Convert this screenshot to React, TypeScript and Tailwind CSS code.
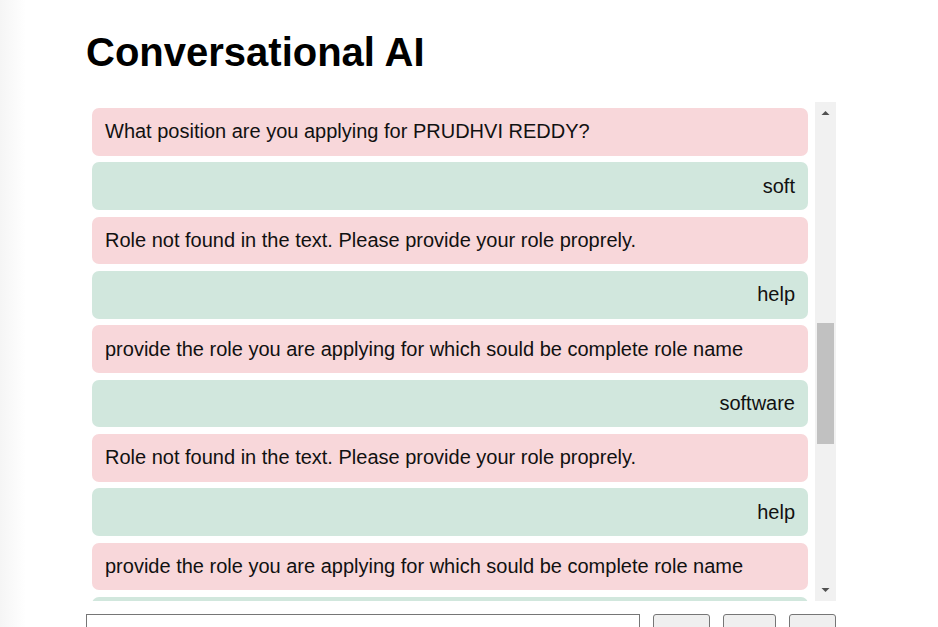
import React from "react";

type Msg = { text: string; from: "bot" | "user" };

const messages: Msg[] = [
  { text: "What position are you applying for PRUDHVI REDDY?", from: "bot" },
  { text: "soft", from: "user" },
  { text: "Role not found in the text. Please provide your role proprely.", from: "bot" },
  { text: "help", from: "user" },
  { text: "provide the role you are applying for which sould be complete role name", from: "bot" },
  { text: "software", from: "user" },
  { text: "Role not found in the text. Please provide your role proprely.", from: "bot" },
  { text: "help", from: "user" },
  { text: "provide the role you are applying for which sould be complete role name", from: "bot" },
  { text: "", from: "user" },
];

export default function App() {
  return (
    <div
      className="relative w-[938px] h-[627px] overflow-hidden bg-white text-black"
      style={{ fontFamily: '"Liberation Sans", Arial, sans-serif' }}
    >
      <div className="absolute left-0 top-0 h-full w-[26px] bg-gradient-to-r from-[#f5f5f5] to-white" />
      <div className="relative ml-[86px] w-[750px] pt-[29px]">
        <h1 className="text-[40px] font-bold leading-[46px] m-0">Conversational AI</h1>
        <div className="mt-[27px] flex h-[499px] overflow-hidden">
          <div className="flex-1 flex flex-col gap-[6.85px] pl-[6px] pr-[7px] pt-[6px]">
            {messages.map((m, i) => (
              <div
                key={i}
                className={
                  "shrink-0 h-[47.5px] rounded-[7px] px-[13px] flex items-center text-[20px] leading-[23px] text-[#111] " +
                  (m.from === "bot" ? "bg-[#f8d7da] justify-start" : "bg-[#d1e7dd] justify-end")
                }
              >
                {m.text}
              </div>
            ))}
          </div>
          <div className="w-[21px] h-full bg-[#f1f1f1] flex flex-col items-center">
            <svg width="21" height="21" viewBox="0 0 21 21" className="shrink-0">
              <path d="M6.5 13 L10.5 9 L14.5 13 Z" fill="#505050" />
            </svg>
            <div className="mt-[200px] w-[17px] h-[121px] bg-[#c1c1c1]" />
            <div className="flex-1" />
            <svg width="21" height="21" viewBox="0 0 21 21" className="shrink-0">
              <path d="M6.5 8 L10.5 12 L14.5 8 Z" fill="#505050" />
            </svg>
          </div>
        </div>
        <div className="mt-[13px] flex gap-[13px]">
          <input className="w-[554px] h-[32px] border border-[#767676] bg-white" />
          <button className="w-[57px] h-[32px] border border-[#767676] bg-[#efefef] rounded-[3px]" />
          <button className="w-[53px] h-[32px] border border-[#767676] bg-[#efefef] rounded-[3px]" />
          <button className="w-[47px] h-[32px] border border-[#767676] bg-[#efefef] rounded-[3px]" />
        </div>
      </div>
    </div>
  );
}
